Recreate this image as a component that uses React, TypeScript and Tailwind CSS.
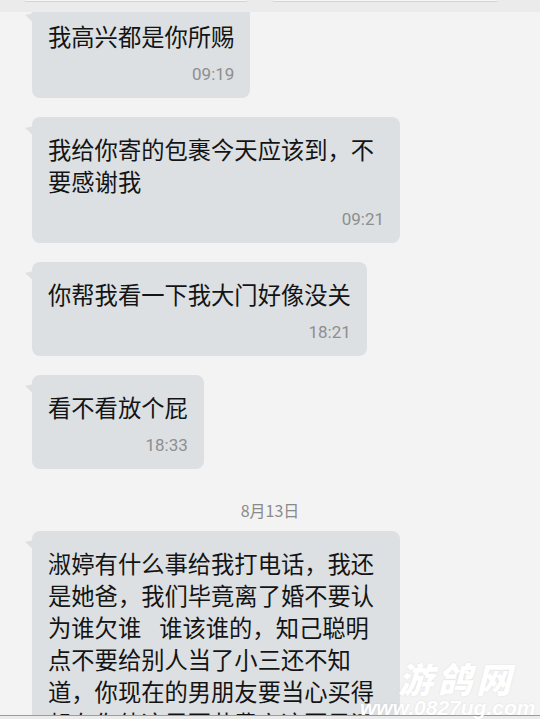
import React from "react";

const cjk = { fontFamily: '"Noto Sans CJK SC", "Noto Sans", sans-serif' };
const num = { fontFamily: 'Roboto, "Noto Sans", sans-serif' };

function Tail() {
  return (
    <svg
      className="absolute left-[-7px] top-[9px]"
      width="8"
      height="10"
      viewBox="0 0 8 10"
    >
      <path d="M8 0 Q4 1.6 0 1.8 L8 9.5 Z" fill="#dce0e3" />
    </svg>
  );
}

function Bubble({
  lines,
  time,
  wide,
}: {
  lines: React.ReactNode[];
  time: string;
  wide?: boolean;
}) {
  return (
    <div
      className={
        "relative rounded-[8px] bg-[#dce0e3] pl-4 pr-4 pt-4 pb-[14px] " +
        (wide ? "w-[368px]" : "")
      }
    >
      <Tail />
      <div
        className="text-[23.3px] leading-[32px] text-[#141414] whitespace-nowrap"
        style={cjk}
      >
        {lines.map((l, i) => (
          <div key={i}>{l}</div>
        ))}
      </div>
      <div
        className="mt-[12px] text-right text-[17px] leading-[20px] text-[#8e8e8e]"
        style={num}
      >
        {time}
      </div>
    </div>
  );
}

export default function App() {
  return (
    <div className="relative h-[719px] w-[540px] overflow-hidden bg-[#f3f3f3]">
      <div className="flex flex-col items-start gap-[19px] pl-[32px] pt-[4px]">
        <Bubble lines={["我高兴都是你所赐"]} time="09:19" />
        <Bubble
          wide
          lines={["我给你寄的包裹今天应该到，不", "要感谢我"]}
          time="09:21"
        />
        <Bubble lines={["你帮我看一下我大门好像没关"]} time="18:21" />
        <Bubble lines={["看不看放个屁"]} time="18:33" />
      </div>

      <div
        className="mt-[31px] mb-[11px] text-center text-[16px] leading-[20px] text-[#8a8a8a]"
        style={cjk}
      >
        8月13日
      </div>

      <div className="pl-[32px]">
        <div className="relative w-[368px] rounded-[8px] bg-[#dce0e3] px-4 pt-4 pb-4">
          <Tail />
          <div
            className="text-[23.3px] leading-[32px] text-[#141414] whitespace-nowrap"
            style={cjk}
          >
            <div>淑婷有什么事给我打电话，我还</div>
            <div>是她爸，我们毕竟离了婚不要认</div>
            <div>
              为谁欠谁<span className="inline-block w-[18px]"> </span>
              谁该谁的，知己聪明
            </div>
            <div>点不要给别人当了小三还不知</div>
            <div>道，你现在的男朋友要当心买得</div>
            <div>起在你他这里要花费六这要是还</div>
          </div>
        </div>
      </div>

      {/* top band */}
      <div className="absolute left-0 top-0 h-[12px] w-full bg-[#ebebeb]">
        <div className="flex gap-[24px] pl-[24px]">
          <div className="h-[2px] w-[224px] rounded-b-[2px] border-b border-[#d4d4d4] bg-[#f6f6f6]" />
          <div className="h-[2px] w-[226px] rounded-b-[2px] border-b border-[#d4d4d4] bg-[#f6f6f6]" />
        </div>
      </div>

      {/* bottom edge */}
      <div className="absolute bottom-0 left-0 h-[4px] w-full border-t border-[#9c9c9c] bg-[#ebebeb]" />

      {/* watermark */}
      <div className="pointer-events-none absolute left-[360px] top-[658px] w-[180px] text-white">
        <div
          className="pl-[38px] text-[35px] font-black italic leading-[40px] tracking-[4px]"
          style={{
            ...cjk,
            textShadow: "0 0 2px rgba(0,0,0,0.1)",
          }}
        >
          游鸽网
        </div>
        <div
          className="text-[21px] font-bold italic leading-[20px]"
          style={{
            fontFamily: '"Liberation Sans", Arial, sans-serif',
            textShadow: "0 0 2px rgba(0,0,0,0.1)",
          }}
        >
          www.0827ug.com
        </div>
      </div>
    </div>
  );
}
